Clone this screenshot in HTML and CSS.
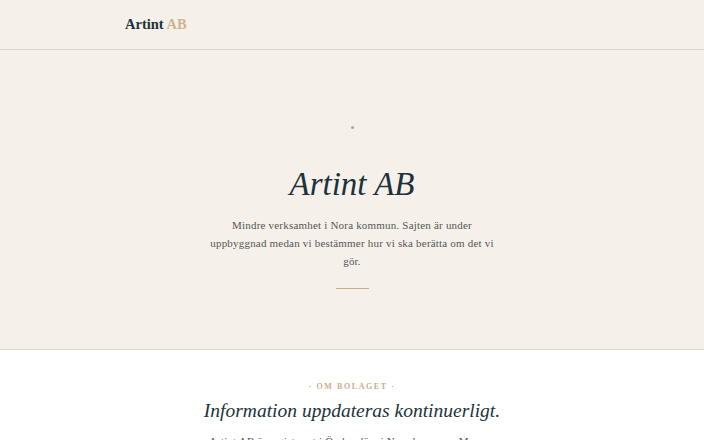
FILE: index.html
```html
<!DOCTYPE html>
<html lang="sv">
<head>
  <meta charset="utf-8">
  <title>Artint AB</title>
  <link rel="stylesheet" href="styles.css">
</head>
<body>
  <!-- Top bar -->
  <header class="topbar">
    <div class="wrap">
      <a class="logo" href="#">Artint <span>AB</span></a>
    </div>
  </header>

  <!-- Hero -->
  <section class="hero">
    <span class="dot"></span>
    <h1>Artint AB</h1>
    <p>Mindre verksamhet i Nora kommun. Sajten är under uppbyggnad medan vi bestämmer hur vi ska berätta om det vi gör.</p>
    <hr class="rule">
  </section>

  <!-- About -->
  <section class="about">
    <div class="eyebrow">· Om bolaget ·</div>
    <h2>Information uppdateras kontinuerligt.</h2>
    <p>Artint AB är registrerat i Örebro län, i Nora kommun. Mer om vad bolaget gör kommer här framöver.</p>
  </section>
</body>
</html>
```

FILE: styles.css
```css
body { margin: 0; font-family: "Liberation Serif", "DejaVu Serif", serif; color: #1e323c; background: #fff; }

.topbar { background: #f5f1ea; border-bottom: 1px solid #dcd6cb; height: 49px; }
.wrap { max-width: 454px; margin: 0 auto; display: flex; align-items: center; height: 100%; }
.logo { font-size: 14.5px; font-weight: bold; color: #1e323c; text-decoration: none; }
.logo span { color: #cdb48f; }

.hero {
  background: #f5f1ea; border-bottom: 1px solid #ddd8c8;
  height: 300px; box-sizing: border-box; padding-top: 76px;
  display: flex; flex-direction: column; align-items: center; text-align: center;
}
.dot { width: 3px; height: 3px; border-radius: 50%; background: #aaa69c; }
.hero h1 { font-style: italic; font-weight: normal; font-size: 33px; margin: 35px 0 0; line-height: 40px; }
.hero p { max-width: 290px; font-size: 11px; line-height: 18px; color: #555; margin: 12px 0 0; letter-spacing: 0.2px; }
.rule { width: 33px; border: 0; border-top: 1px solid #c9ae88; margin: 18px 0 0; }

.about { text-align: center; padding-top: 32px; }
.eyebrow { font-size: 8px; letter-spacing: 1.6px; text-transform: uppercase; color: #c9b08c; font-weight: bold; }
.about h2 { font-style: italic; font-weight: normal; font-size: 19.5px; margin: 9px 0 0; }
.about p { font-size: 11px; line-height: 18px; color: #555; margin: 10px auto 0; max-width: 300px; letter-spacing: 0.2px; }
```
